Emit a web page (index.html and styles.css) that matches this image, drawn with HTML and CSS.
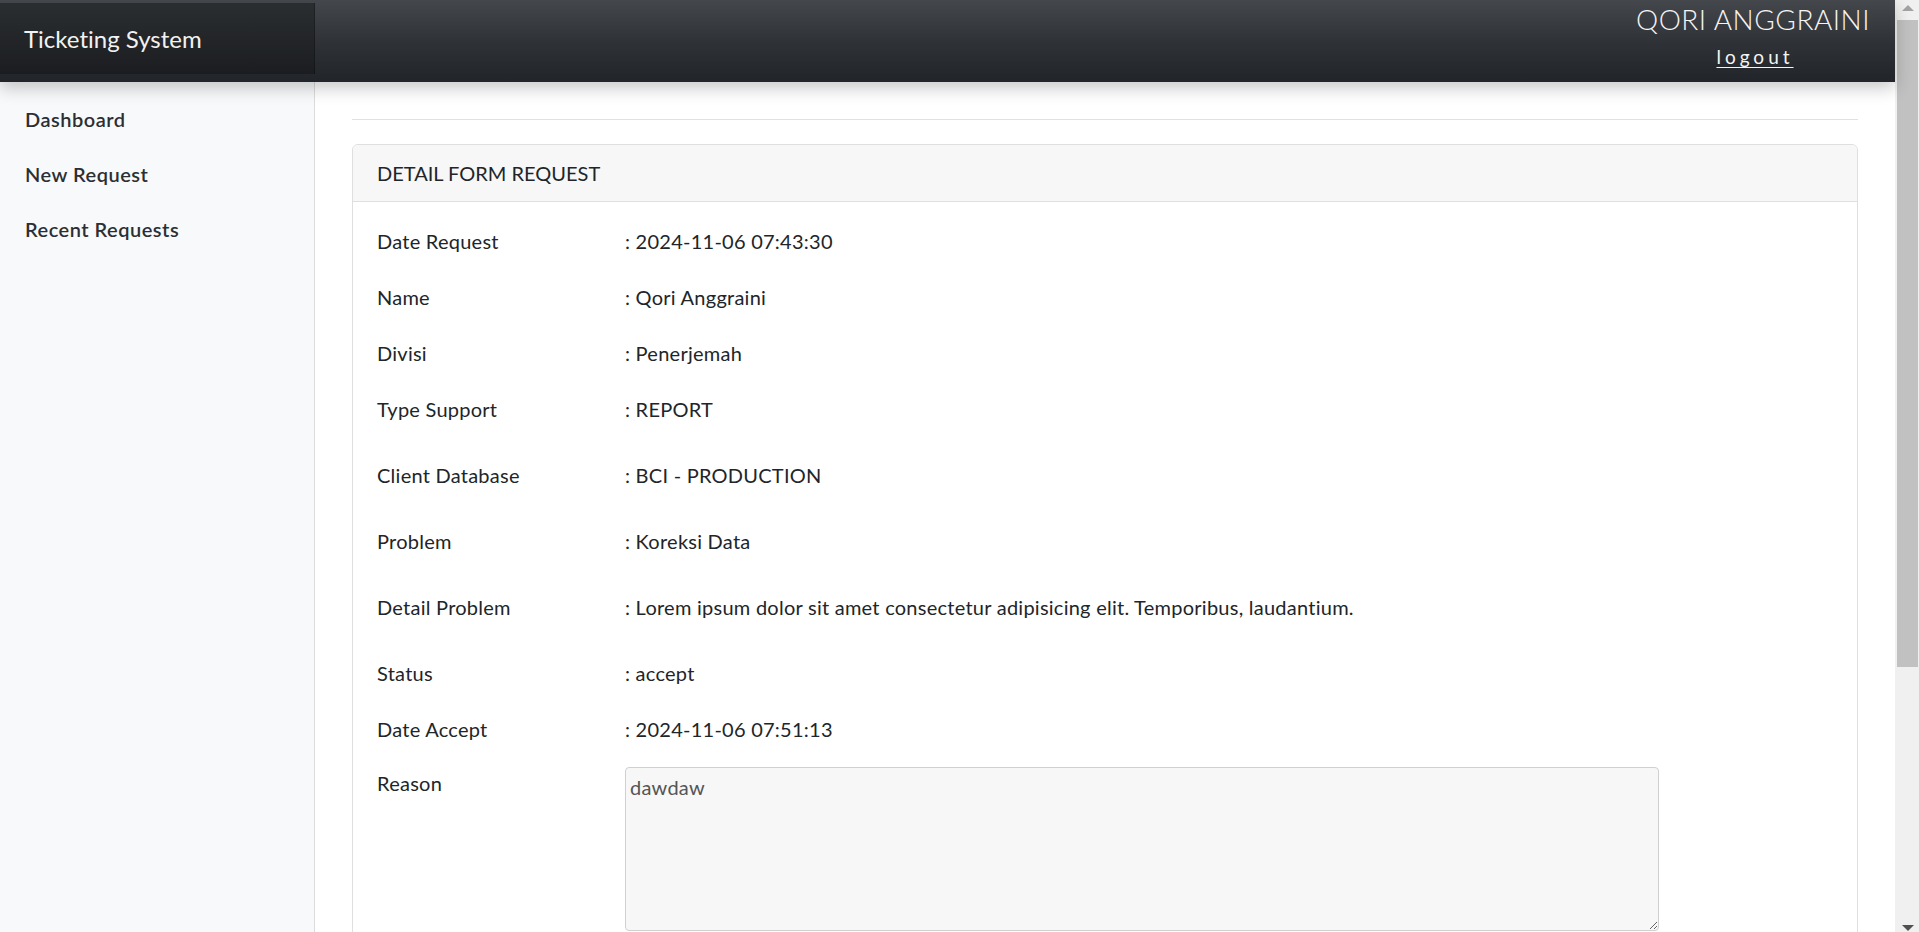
FILE: index.html
```html
<!DOCTYPE html>
<html lang="en">
<head>
<meta charset="utf-8">
<title>Ticketing System</title>
<link rel="stylesheet" href="styles.css">
</head>
<body>
<div class="page">
  <header class="navbar">
    <div class="brand">Ticketing System</div>
    <div class="user">
      <div class="user-name">QORI ANGGRAINI</div>
      <a class="logout" href="#">logout</a>
    </div>
  </header>
  <div class="layout">
    <nav class="sidebar">
      <a class="nav-link" href="#">Dashboard</a>
      <a class="nav-link" href="#">New Request</a>
      <a class="nav-link" href="#">Recent Requests</a>
    </nav>
    <main class="main">
      <hr class="divider">
      <section class="card">
        <div class="card-header">DETAIL FORM REQUEST</div>
        <div class="card-body">
          <div class="row"><div class="label">Date Request</div><div class="value">: 2024-11-06 07:43:30</div></div>
          <div class="row"><div class="label">Name</div><div class="value">: Qori Anggraini</div></div>
          <div class="row"><div class="label">Divisi</div><div class="value">: Penerjemah</div></div>
          <div class="row row-wide"><div class="label">Type Support</div><div class="value">: REPORT</div></div>
          <div class="row row-wide"><div class="label">Client Database</div><div class="value">: BCI - PRODUCTION</div></div>
          <div class="row row-wide"><div class="label">Problem</div><div class="value">: Koreksi Data</div></div>
          <div class="row row-wide"><div class="label">Detail Problem</div><div class="value">: Lorem ipsum dolor sit amet consectetur adipisicing elit. Temporibus, laudantium.</div></div>
          <div class="row"><div class="label">Status</div><div class="value">: accept</div></div>
          <div class="row row-tight"><div class="label">Date Accept</div><div class="value">: 2024-11-06 07:51:13</div></div>
          <div class="row row-reason"><div class="label">Reason</div><div class="value"><textarea class="reason" disabled>dawdaw</textarea></div></div>
        </div>
      </section>
    </main>
  </div>
</div>
<div class="scrollbar" aria-hidden="true">
  <div class="sb-btn"><span class="arrow-up"></span></div>
  <div class="sb-track"><div class="sb-thumb"></div></div>
  <div class="sb-btn sb-btn-bottom"><span class="arrow-down"></span></div>
</div>
</body>
</html>
```
FILE: styles.css
```css
* { box-sizing: border-box; }

html, body {
  margin: 0;
  padding: 0;
}

body {
  display: flex;
  align-items: flex-start;
  font-family: "Lato", "Open Sans", sans-serif;
  font-size: 20px;
  line-height: 30px;
  letter-spacing: 0.25px;
  font-variant-ligatures: none;
  color: #212529;
  background: #ffffff;
}

.page {
  flex: 1;
  min-width: 0;
}

/* Drawn scrollbar column */
.scrollbar {
  position: sticky;
  top: 0;
  flex: 0 0 24px;
  width: 24px;
  height: 100vh;
  display: flex;
  flex-direction: column;
  background: #f0f0f0;
}

.sb-btn {
  height: 19px;
  display: flex;
  justify-content: center;
  align-items: flex-start;
  padding-top: 5px;
  padding-left: 1px;
}

.sb-btn-bottom {
  align-items: flex-end;
  padding-top: 0;
  padding-bottom: 1px;
}

.arrow-up {
  width: 0;
  height: 0;
  border-left: 6px solid transparent;
  border-right: 6px solid transparent;
  border-bottom: 6px solid #a3a3a3;
}

.arrow-down {
  width: 0;
  height: 0;
  border-left: 6px solid transparent;
  border-right: 6px solid transparent;
  border-top: 6px solid #505050;
}

.sb-track {
  flex: 1;
  padding: 1px 1px 0 2px;
}

.sb-thumb {
  height: 647px;
  background: #c1c1c1;
}

/* Navbar */
.navbar {
  position: relative;
  z-index: 2;
  height: 82px;
  display: flex;
  justify-content: space-between;
  align-items: flex-start;
  background: linear-gradient(to bottom, #44474b 0%, #2f3236 50%, #212428 100%);
  box-shadow: 0 6px 16px rgba(0, 0, 0, 0.22);
}

.brand {
  width: 315px;
  height: 71px;
  margin-top: 3px;
  padding-left: 24px;
  display: flex;
  align-items: center;
  font-size: 24px;
  letter-spacing: 0;
  color: #f2f2f2;
  background: linear-gradient(to bottom, #2b2e31 0%, #1b1d20 100%);
  box-shadow: inset -1px 0 0 rgba(0, 0, 0, 0.25);
}

.user {
  display: flex;
  flex-direction: column;
  align-items: center;
  padding: 1px 25px 0 0;
}

.user-name {
  font-size: 28px;
  line-height: 36px;
  font-weight: 300;
  color: #f4f4f4;
  letter-spacing: 0.5px;
}

.logout {
  margin-top: 9px;
  font-size: 19px;
  line-height: 22px;
  letter-spacing: 4px;
  margin-right: -4px;
  color: #f4f4f4;
  text-decoration: underline;
  text-underline-offset: 3px;
}

/* Layout */
.layout {
  display: flex;
  align-items: stretch;
}

.sidebar {
  width: 315px;
  flex: 0 0 315px;
  background: #f8f9fa;
  border-right: 1px solid #dcdcdc;
  padding-top: 9px;
  display: flex;
  flex-direction: column;
}

.nav-link {
  display: block;
  padding: 12.5px 25px;
  font-size: 20px;
  line-height: 30px;
  font-weight: 600;
  letter-spacing: 0.5px;
  color: #2b2f33;
  text-decoration: none;
}

.main {
  flex: 1;
  padding: 37px 37px 58px 37px;
}

.divider {
  margin: 0;
  border: 0;
  border-top: 1px solid #e1e1e1;
}

.card {
  margin-top: 24px;
  border: 1px solid #dfdfdf;
  border-radius: 6px;
  background: #ffffff;
}

.card-header {
  height: 57px;
  padding: 0 24px;
  display: flex;
  align-items: center;
  background: #f7f7f7;
  border-bottom: 1px solid #dfdfdf;
  border-radius: 6px 6px 0 0;
  font-size: 20px;
  letter-spacing: 0;
  color: #212529;
}

.card-body {
  padding: 24px 24px 300px;
}

.row {
  display: grid;
  grid-template-columns: 248px 1fr;
  margin-bottom: 26px;
}

.row-wide { margin-bottom: 36px; }
.row-tight { margin-bottom: 24px; }
.row-reason { margin-bottom: 0; }

.reason {
  display: block;
  width: 1034px;
  height: 164px;
  margin: -1px 0 0 0;
  padding: 4px 4px;
  font-family: "Lato", "Open Sans", sans-serif;
  font-size: 20px;
  line-height: 30px;
  letter-spacing: 0.25px;
  color: #555555;
  background: #f7f7f7;
  border: 1px solid #d0d0d0;
  border-radius: 4px;
  resize: vertical;
}
```
